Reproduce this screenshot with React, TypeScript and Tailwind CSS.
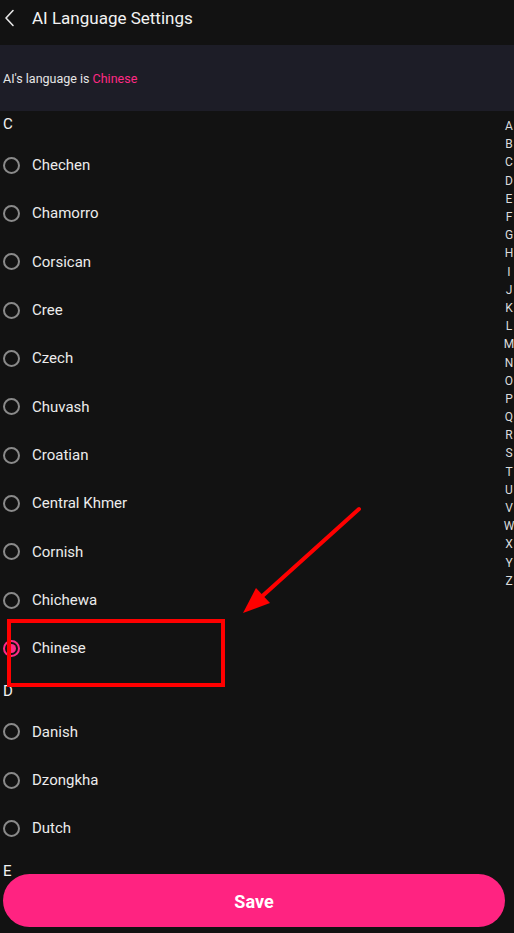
import { useState } from 'react';

const groups: { letter: string; items: string[] }[] = [
  {
    letter: 'C',
    items: ['Chechen', 'Chamorro', 'Corsican', 'Cree', 'Czech', 'Chuvash', 'Croatian', 'Central Khmer', 'Cornish', 'Chichewa', 'Chinese'],
  },
  { letter: 'D', items: ['Danish', 'Dzongkha', 'Dutch'] },
  { letter: 'E', items: [] },
];

const alphabet = 'ABCDEFGHIJKLMNOPQRSTUVWXYZ'.split('');

function Radio({ checked }: { checked: boolean }) {
  return checked ? (
    <span className="flex h-[17px] w-[17px] items-center justify-center rounded-full border-2 border-[#ff2a85]">
      <span className="h-[9px] w-[9px] rounded-full bg-[#ff2a85]" />
    </span>
  ) : (
    <span className="h-[17px] w-[17px] rounded-full border-2 border-[#8a8a8a]" />
  );
}

export default function App() {
  const [selected, setSelected] = useState('Chinese');

  return (
    <div className="relative h-[933px] w-full overflow-hidden bg-[#121212] text-[#ececec]" style={{ fontFamily: 'Roboto, "Noto Sans", sans-serif' }}>
      {/* Header */}
      <div className="flex h-[45px] items-center gap-[16px] pb-[9px] pl-[4px]">
        <svg width="12" height="18" viewBox="0 0 12 18" fill="none">
          <polyline points="9,1.5 2,9 9,16.5" stroke="#e6e6e6" strokeWidth="1.6" strokeLinecap="round" strokeLinejoin="round" />
        </svg>
        <h1 className="text-[17px] leading-[22px] text-[#f2f2f2]">AI Language Settings</h1>
      </div>

      {/* Current language banner */}
      <div className="flex h-[66px] items-center bg-[#1d1d27] px-[3px] pt-[3px] text-[12.5px] text-[#e6e6e6]">
        AI's language is&nbsp;<span className="text-[#ff2a85]">Chinese</span>
      </div>

      {/* Language list */}
      <div className="-mt-[5px]">
        {groups.map(g => (
          <div key={g.letter}>
            <div className="flex h-[35px] items-center pl-[3px] pt-[2px] text-[15px] text-[#f2f2f2]">{g.letter}</div>
            {g.items.map(name => (
              <button
                key={name}
                onClick={() => setSelected(name)}
                className="flex h-[48.35px] w-full items-center gap-[12px] pl-[3px] text-left text-[15px] text-[#ececec]"
              >
                <Radio checked={selected === name} />
                <span>{name}</span>
              </button>
            ))}
          </div>
        ))}
      </div>

      {/* Alphabet index */}
      <div className="absolute right-0 top-[117px] flex w-[10px] flex-col items-center text-[12px] text-[#dcdcdc]">
        {alphabet.map(l => (
          <span key={l} className="flex h-[18.2px] items-center">{l}</span>
        ))}
      </div>

      {/* Annotation */}
      <div className="pointer-events-none absolute left-[7px] top-[619px] h-[68px] w-[218px] border-[4px] border-[#ff0000]" />
      <svg className="pointer-events-none absolute left-0 top-0" width="514" height="933">
        <line x1="359" y1="509" x2="258" y2="600" stroke="#ff0000" strokeWidth="4" strokeLinecap="round" />
        <polygon points="243,613 270,603 256,588" fill="#ff0000" />
      </svg>

      {/* Save */}
      <button className="absolute bottom-[6px] left-[3px] right-[9px] h-[53px] rounded-full bg-[#ff2381] pt-[2px] text-[18px] font-bold text-white">
        Save
      </button>
    </div>
  );
}
